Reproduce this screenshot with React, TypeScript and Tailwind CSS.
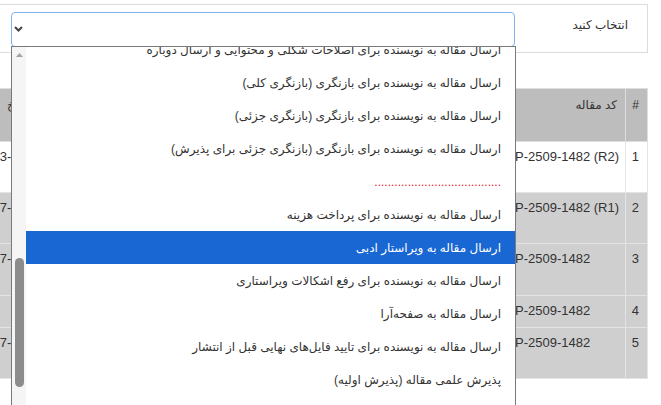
const options = [
  { label: 'ارسال مقاله به نویسنده برای اصلاحات شکلی و محتوایی و ارسال دوباره' },
  { label: 'ارسال مقاله به نویسنده برای بازنگری (بازنگری کلی)' },
  { label: 'ارسال مقاله به نویسنده برای بازنگری (بازنگری جزئی)' },
  { label: 'ارسال مقاله به نویسنده برای بازنگری (بازنگری جزئی برای پذیرش)' },
  { label: '......................................', divider: true },
  { label: 'ارسال مقاله به نویسنده برای پرداخت هزینه' },
  { label: 'ارسال مقاله به ویراستار ادبی', active: true },
  { label: 'ارسال مقاله به نویسنده برای رفع اشکالات ویراستاری' },
  { label: 'ارسال مقاله به صفحه‌آرا' },
  { label: 'ارسال مقاله به نویسنده برای تایید فایل‌های نهایی قبل از انتشار' },
  { label: 'پذیرش علمی مقاله (پذیرش اولیه)' },
  { label: 'رد مقاله' },
]

const rows = [
  { n: 1, code: 'P-2509-1482 (R2)', date: '1403-07-15', h: 'h-[51px]', bg: 'bg-white' },
  { n: 2, code: 'P-2509-1482 (R1)', date: '1397-07-02', h: 'h-[51px]', bg: 'bg-[#cfcfcf]' },
  { n: 3, code: 'P-2509-1482', date: '1397-07-01', h: 'h-[52px]', bg: 'bg-[#cfcfcf]' },
  { n: 4, code: 'P-2509-1482', date: '', h: 'h-[32px]', bg: 'bg-[#cfcfcf]' },
  { n: 5, code: 'P-2509-1482', date: '1397-07-01', h: 'h-[51px]', bg: 'bg-[#cfcfcf]' },
]

export default function App() {
  return (
    <div
      dir="rtl"
      className="relative w-[661px] h-[405px] overflow-hidden bg-white text-[#333] font-['Liberation_Sans','DejaVu_Sans',sans-serif]"
    >
      <div className="pt-[4px]">
        {/* Filter box */}
        <div className="-ml-px mr-[13px] h-[49px] border border-[#dcdcdc] flex items-start">
          <div className="w-[132px] shrink-0 pt-[11px] pr-[19px] text-[12px] leading-[18px]">انتخاب کنید</div>
          <div className="relative mt-[7px] w-[504px] h-[35px] shrink-0 rounded-[4px] border border-[#7db3ea] bg-white">
            <svg className="absolute left-[2px] top-[13px] w-[9px] h-[6px]" viewBox="0 0 9 6" fill="none">
              <path d="M1 1l3.5 3.5L8 1" stroke="#444" strokeWidth={2} />
            </svg>
          </div>
        </div>

        {/* Table */}
        <table className="mt-[35px] -ml-[40px] mr-[13px] w-[688px] table-fixed border-collapse text-[13px] leading-[18px]">
          <colgroup>
            <col className="w-[22px]" />
            <col className="w-[120px]" />
            <col className="w-[470px]" />
            <col className="w-[76px]" />
          </colgroup>
          <thead>
            <tr className="h-[53px] bg-[#bdbdbd]">
              <th className="border border-[#dedede] align-top pt-[7px] pr-[8px] text-right font-normal text-[12px]">#</th>
              <th className="border border-[#dedede] align-top pt-[7px] pr-[8px] text-right font-normal text-[12px]">کد مقاله</th>
              <th className="border border-[#dedede] align-top pt-[7px] pr-[8px] text-right font-normal text-[12px]">عنوان مقاله</th>
              <th className="border border-[#dedede] align-top pt-[7px] pr-[4px] text-right font-normal text-[12px]">تاریخ</th>
            </tr>
          </thead>
          <tbody>
            {rows.map((r) => (
              <tr key={r.n} className={`${r.h} ${r.bg}`}>
                <td className="border border-[#e4e4e4] align-top pt-[6px] pr-[8px] text-right">{r.n}</td>
                <td dir="ltr" className="border border-[#e4e4e4] align-top pt-[6px] pl-[9px] text-left whitespace-nowrap">
                  {r.code}
                </td>
                <td className="border border-[#e4e4e4] align-top pt-[6px] pr-[8px] text-right">عنوان</td>
                <td dir="ltr" className="border border-[#e4e4e4] align-top pt-[6px] pl-[18px] text-left whitespace-nowrap">
                  {r.date}
                </td>
              </tr>
            ))}
          </tbody>
        </table>
      </div>

      {/* Open select list */}
      <div dir="ltr" className="absolute left-[11px] top-[46px] w-[505px] h-[380px] border border-[#7a7a7a] bg-white flex">
        <div className="w-[14px] shrink-0 bg-[#f5f5f5] flex flex-col items-center">
          <svg className="mt-[6px] w-[7px] h-[4px]" viewBox="0 0 7 4">
            <path d="M0 4L3.5 0L7 4z" fill="#a3a3a3" />
          </svg>
          <div className="mt-[201px] w-[9px] h-[129px] rounded-full bg-[#8c8c8c]" />
        </div>
        <div dir="rtl" className="flex-1 overflow-hidden">
          <div className="-mt-[14px]">
            {options.map((o, i) => (
              <div
                key={i}
                className={`h-[33px] flex items-center pr-[14px] text-[12px] whitespace-nowrap ${
                  o.active ? 'bg-[#1967d2] text-white' : o.divider ? 'text-[#e8202a]' : 'text-[#333]'
                }`}
              >
                {o.label}
              </div>
            ))}
          </div>
        </div>
      </div>
    </div>
  )
}
